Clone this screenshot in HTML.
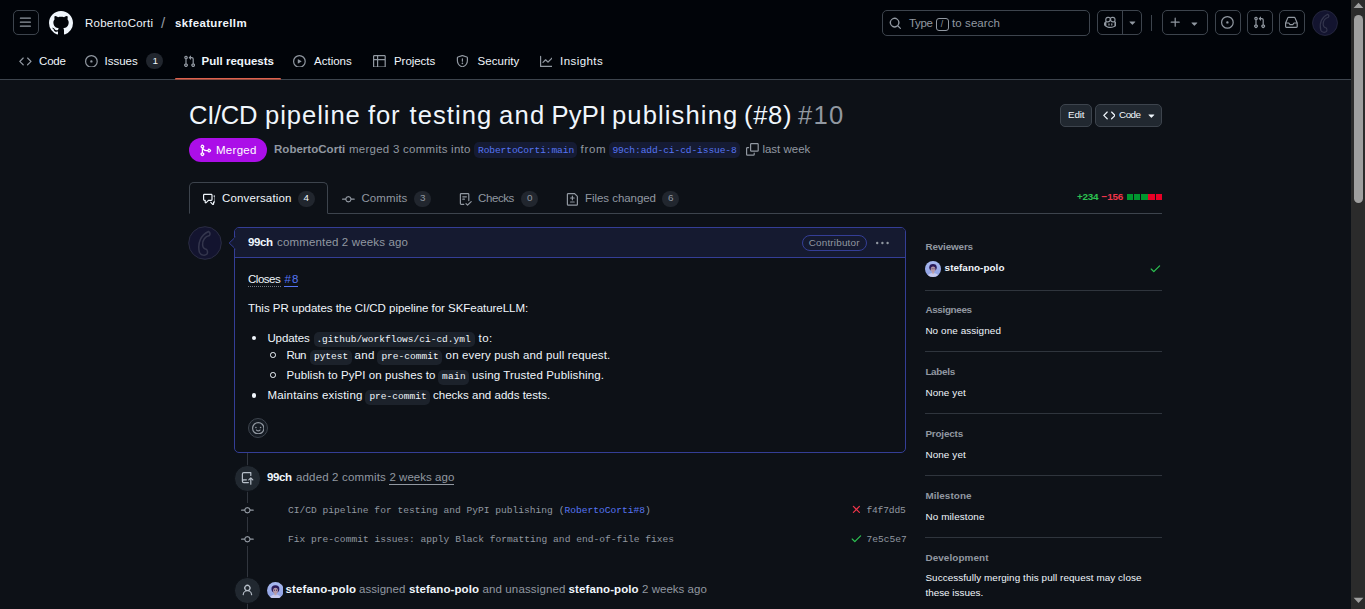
<!DOCTYPE html>
<html><head><meta charset="utf-8"><title>PR</title>
<style>
html,body{margin:0;padding:0;background:#0d1117;overflow:hidden;}
body{width:1365px;height:609px;position:relative;font-family:"Liberation Sans",sans-serif;}
#p{position:absolute;left:0;top:0;width:1365px;height:609px;overflow:hidden;}
#p>*{position:absolute;display:block;box-sizing:border-box;white-space:pre;}
</style></head><body><div id="p">
<div style="left:0px;top:0px;width:1365px;height:80px;background:#010409"></div>
<div style="left:0px;top:79px;width:1351px;height:1px;background:#3d444d"></div>
<div style="left:13px;top:10px;width:25.6px;height:24.8px;border:1px solid #3d444d;border-radius:5px"></div>
<svg style="left:19.4px;top:16.0px" width="12.8" height="12.8" viewBox="0 0 16 16" fill="#9198a1"><path d="M1 2.75A.75.75 0 0 1 1.75 2h12.5a.75.75 0 0 1 0 1.5H1.75A.75.75 0 0 1 1 2.750Zm0 5A.75.75 0 0 1 1.75 7h12.5a.75.75 0 0 1 0 1.5H1.75A.75.75 0 0 1 1 7.750ZM1.75 12h12.5a.75.75 0 0 1 0 1.5H1.75a.75.75 0 0 1 0-1.5Z"/></svg>
<svg style="left:48.6px;top:10.6px" width="24" height="24" viewBox="0 0 16 16" fill="#f0f6fc"><path d="M8 0c4.42 0 8 3.58 8 8a8.013 8.013 0 0 1-5.45 7.59c-.4.08-.55-.17-.55-.38 0-.27.01-1.13.01-2.2 0-.75-.25-1.23-.54-1.48 1.78-.2 3.65-.88 3.65-3.95 0-.88-.31-1.59-.82-2.15.08-.2.36-1.02-.08-2.12 0 0-.67-.22-2.2.82-.64-.18-1.32-.27-2-.27-.68 0-1.36.09-2 .27-1.53-1.03-2.2-.82-2.2-.82-.44 1.1-.16 1.92-.08 2.12-.51.56-.82 1.28-.82 2.15 0 3.06 1.86 3.75 3.64 3.95-.23.2-.44.55-.51 1.07-.46.21-1.61.55-2.33-.66-.15-.24-.6-.83-1.23-.82-.67.01-.27.38.01.53.34.19.73.9.82 1.13.16.45.68 1.31 2.69.94 0 .67.01 1.3.01 1.49 0 .21-.15.45-.55.38A7.995 7.995 0 0 1 0 8c0-4.42 3.58-8 8-8Z"/></svg>
<span style="left:85.00px;top:15.01px;font:400 11.5px/16px 'Liberation Sans', sans-serif;color:#f0f6fc;letter-spacing:0.251px;">RobertoCorti</span>
<span style="left:161.00px;top:12.10px;font:400 15px/21px 'Liberation Sans', sans-serif;color:#9198a1;letter-spacing:0.000px;">/</span>
<span style="left:175.00px;top:15.01px;font:700 11.5px/16px 'Liberation Sans', sans-serif;color:#f0f6fc;letter-spacing:0.352px;">skfeaturellm</span>
<svg style="left:19px;top:54.6px" width="12.8" height="12.8" viewBox="0 0 16 16" fill="#9198a1"><path d="m11.28 3.22 4.25 4.25a.75.75 0 0 1 0 1.06l-4.25 4.25a.749.749 0 0 1-1.275-.326.749.749 0 0 1 .215-.734L13.94 8l-3.72-3.72a.749.749 0 0 1 .326-1.275.749.749 0 0 1 .734.215Zm-6.56 0a.751.751 0 0 1 1.042.018.751.751 0 0 1 .018 1.042L2.06 8l3.72 3.72a.749.749 0 0 1-.326 1.275.749.749 0 0 1-.734-.215L.47 8.53a.75.75 0 0 1 0-1.06Z"/></svg>
<span style="left:39.00px;top:53.01px;font:400 11.5px/16px 'Liberation Sans', sans-serif;color:#f0f6fc;letter-spacing:-0.165px;">Code</span>
<svg style="left:85px;top:54.6px" width="12.8" height="12.8" viewBox="0 0 16 16" fill="#9198a1"><path d="M8 9.5a1.5 1.5 0 1 0 0-3 1.5 1.5 0 0 0 0 3ZM8 0a8 8 0 1 1 0 16A8 8 0 0 1 8 0ZM1.5 8a6.5 6.5 0 1 0 13 0 6.5 6.5 0 0 0-13 0Z"/></svg>
<span style="left:104.60px;top:53.01px;font:400 11.5px/16px 'Liberation Sans', sans-serif;color:#f0f6fc;letter-spacing:-0.017px;">Issues</span>
<div style="left:146px;top:53px;width:17px;height:16px;background:#21262e;border-radius:8px"></div>
<span style="left:152.60px;top:53.57px;font:400 9.9px/14px 'Liberation Sans', sans-serif;color:#f0f6fc;letter-spacing:0.000px;">1</span>
<svg style="left:182.6px;top:54.6px" width="12.8" height="12.8" viewBox="0 0 16 16" fill="#9198a1"><path d="M1.5 3.25a2.25 2.25 0 1 1 3 2.122v5.256a2.251 2.251 0 1 1-1.5 0V5.372A2.25 2.25 0 0 1 1.5 3.25Zm5.677-.177L9.573.677A.25.25 0 0 1 10 .854V2.5h1A2.5 2.5 0 0 1 13.5 5v5.628a2.251 2.251 0 1 1-1.5 0V5a1 1 0 0 0-1-1h-1v1.646a.25.25 0 0 1-.427.177L7.177 3.427a.25.25 0 0 1 0-.354ZM3.75 2.5a.75.75 0 1 0 0 1.5.75.75 0 0 0 0-1.5Zm0 9.5a.75.75 0 1 0 0 1.5.75.75 0 0 0 0-1.5Zm8.25.75a.75.75 0 1 0 1.5 0 .75.75 0 0 0-1.5 0Z"/></svg>
<span style="left:201.60px;top:53.01px;font:700 11.5px/16px 'Liberation Sans', sans-serif;color:#f0f6fc;letter-spacing:0.015px;">Pull requests</span>
<div style="left:175px;top:77.6px;width:105.5px;height:1.4px;background:#de624e;border-radius:1px 1px 0 0"></div>
<div style="left:175px;top:79px;width:105.5px;height:1px;background:#8f4a3f"></div>
<svg style="left:293px;top:54.6px" width="12.8" height="12.8" viewBox="0 0 16 16" fill="#9198a1"><path d="M8 0a8 8 0 1 1 0 16A8 8 0 0 1 8 0ZM1.5 8a6.5 6.5 0 1 0 13 0 6.5 6.5 0 0 0-13 0Zm4.879-2.773 4.264 2.559a.25.25 0 0 1 0 .428l-4.264 2.559A.25.25 0 0 1 6 10.559V5.442a.25.25 0 0 1 .379-.215Z"/></svg>
<span style="left:314.00px;top:53.01px;font:400 11.5px/16px 'Liberation Sans', sans-serif;color:#f0f6fc;letter-spacing:0.006px;">Actions</span>
<svg style="left:373px;top:54.6px" width="12.8" height="12.8" viewBox="0 0 16 16" fill="#9198a1"><path d="M0 1.75C0 .784.784 0 1.75 0h12.5C15.216 0 16 .784 16 1.75v12.5A1.75 1.75 0 0 1 14.25 16H1.75A1.75 1.75 0 0 1 0 14.25ZM6.5 6.5v8h7.75a.25.25 0 0 0 .25-.25V6.5Zm8-1.5V1.75a.25.25 0 0 0-.25-.25H6.5V5Zm-13 1.5v7.75c0 .138.112.25.25.25H5v-8ZM5 5V1.5H1.75a.25.25 0 0 0-.25.25V5Z"/></svg>
<span style="left:394.00px;top:53.01px;font:400 11.5px/16px 'Liberation Sans', sans-serif;color:#f0f6fc;letter-spacing:-0.056px;">Projects</span>
<svg style="left:456px;top:54.6px" width="12.8" height="12.8" viewBox="0 0 16 16" fill="#9198a1"><path d="M7.467.133a1.748 1.748 0 0 1 1.066 0l5.25 1.68A1.75 1.75 0 0 1 15 3.48V7c0 1.566-.32 3.182-1.303 4.682-.983 1.498-2.585 2.813-5.032 3.855a1.697 1.697 0 0 1-1.33 0c-2.447-1.042-4.049-2.357-5.032-3.855C1.32 10.182 1 8.566 1 7V3.48a1.75 1.75 0 0 1 1.217-1.667Zm.61 1.429a.25.25 0 0 0-.153 0l-5.25 1.68a.25.25 0 0 0-.174.238V7c0 1.358.275 2.666 1.057 3.86.784 1.194 2.121 2.34 4.366 3.297a.196.196 0 0 0 .154 0c2.245-.956 3.582-2.104 4.366-3.298C13.225 9.666 13.5 8.36 13.5 7V3.48a.251.251 0 0 0-.174-.237l-5.25-1.68ZM8.75 4.75v3a.75.75 0 0 1-1.5 0v-3a.75.75 0 0 1 1.5 0ZM9 10.5a1 1 0 1 1-2 0 1 1 0 0 1 2 0Z"/></svg>
<span style="left:477.60px;top:53.01px;font:400 11.5px/16px 'Liberation Sans', sans-serif;color:#f0f6fc;letter-spacing:0.030px;">Security</span>
<svg style="left:539.6px;top:54.6px" width="12.8" height="12.8" viewBox="0 0 16 16" fill="#9198a1"><path d="M1.5 1.75V13.5h13.75a.75.75 0 0 1 0 1.5H.75a.75.75 0 0 1-.75-.75V1.75a.75.75 0 0 1 1.5 0Zm14.28 2.53-5.25 5.25a.75.75 0 0 1-1.06 0L7 7.06 4.28 9.78a.751.751 0 0 1-1.042-.018.751.751 0 0 1-.018-1.042l3.25-3.25a.75.75 0 0 1 1.06 0L10 7.94l4.72-4.72a.751.751 0 0 1 1.042.018.751.751 0 0 1 .018 1.042Z"/></svg>
<span style="left:560.00px;top:53.01px;font:400 11.5px/16px 'Liberation Sans', sans-serif;color:#f0f6fc;letter-spacing:0.445px;">Insights</span>
<div style="left:882px;top:10px;width:208px;height:26px;border:1px solid #3d444d;border-radius:5px"></div>
<svg style="left:889px;top:16.6px" width="12.8" height="12.8" viewBox="0 0 16 16" fill="#9198a1"><path d="M10.68 11.74a6 6 0 0 1-7.922-8.982 6 6 0 0 1 8.982 7.922l3.04 3.04a.749.749 0 0 1-.326 1.275.749.749 0 0 1-.734-.215ZM11.5 7a4.499 4.499 0 1 0-8.997 0A4.499 4.499 0 0 0 11.5 7Z"/></svg>
<span style="left:909.00px;top:15.01px;font:400 11.5px/16px 'Liberation Sans', sans-serif;color:#9198a1;letter-spacing:-0.312px;">Type</span>
<div style="left:936.4px;top:18px;width:12.6px;height:12.6px;border:1px solid #9198a1;border-radius:3px"></div>
<span style="left:940.80px;top:18.05px;font:400 8.5px/12px 'Liberation Sans', sans-serif;color:#9198a1;letter-spacing:0.000px;">/</span>
<span style="left:952.00px;top:15.01px;font:400 11.5px/16px 'Liberation Sans', sans-serif;color:#9198a1;letter-spacing:0.087px;">to search</span>
<div style="left:1097px;top:10px;width:44.8px;height:24.8px;border:1px solid #3d444d;border-radius:5px"></div>
<div style="left:1122px;top:10px;width:1px;height:24.8px;background:#3d444d"></div>
<svg style="left:1103.6px;top:16.0px" width="12.8" height="12.8" viewBox="0 0 16 16" fill="#9198a1"><path d="M7.998 15.035c-4.562 0-7.873-2.914-7.998-3.749V9.338c.085-.628.677-1.686 1.588-2.065.013-.07.024-.143.036-.218.029-.183.06-.384.126-.612-.201-.508-.254-1.084-.254-1.656 0-.87.128-1.769.693-2.484.579-.733 1.494-1.124 2.724-1.261 1.206-.134 2.262.034 2.944.765.05.053.096.108.139.165.044-.057.094-.112.143-.165.682-.731 1.738-.899 2.944-.765 1.23.137 2.145.528 2.724 1.261.566.715.693 1.614.693 2.484 0 .572-.053 1.148-.254 1.656.066.228.098.429.126.612.012.076.024.148.037.218.924.385 1.522 1.471 1.591 2.095v1.872c0 .766-3.351 3.795-8.002 3.795Zm0-1.485c2.28 0 4.584-1.11 5.002-1.433V7.862l-.023-.116c-.49.21-1.075.291-1.727.291-1.146 0-2.059-.327-2.71-.991A3.222 3.222 0 0 1 8 6.303a3.24 3.24 0 0 1-.544.743c-.65.664-1.563.991-2.71.991-.652 0-1.236-.081-1.727-.291l-.023.116v4.255c.419.323 2.722 1.433 5.002 1.433ZM6.762 2.83c-.193-.206-.637-.413-1.682-.297-1.019.113-1.479.404-1.713.7-.247.312-.369.789-.369 1.554 0 .793.129 1.171.308 1.371.162.181.519.379 1.442.379.853 0 1.339-.235 1.638-.54.315-.322.527-.827.617-1.553.117-.935-.037-1.395-.241-1.614Zm4.155-.297c-1.044-.116-1.488.091-1.681.297-.204.219-.359.679-.242 1.614.091.726.303 1.231.618 1.553.299.305.784.54 1.638.54.922 0 1.28-.198 1.442-.379.179-.2.308-.578.308-1.371 0-.765-.123-1.242-.37-1.554-.233-.296-.693-.587-1.713-.7ZM6.25 9.037a.75.75 0 0 1 .75.75v1.501a.75.75 0 0 1-1.5 0V9.787a.75.75 0 0 1 .75-.75Zm4.25.75v1.501a.75.75 0 0 1-1.5 0V9.787a.75.75 0 0 1 1.5 0Z"/></svg>
<svg style="left:1125.6px;top:16.0px" width="12.8" height="12.8" viewBox="0 0 16 16" fill="#9198a1"><path d="m4.427 7.427 3.396 3.396a.25.25 0 0 0 .354 0l3.396-3.396A.25.25 0 0 0 11.396 7H4.604a.25.25 0 0 0-.177.427Z"/></svg>
<div style="left:1151px;top:15px;width:1px;height:16px;background:#3d444d"></div>
<div style="left:1162px;top:10px;width:46px;height:24.8px;border:1px solid #3d444d;border-radius:5px"></div>
<svg style="left:1168.6px;top:16.0px" width="12.8" height="12.8" viewBox="0 0 16 16" fill="#9198a1"><path d="M7.75 2a.75.75 0 0 1 .75.75V7h4.25a.75.75 0 0 1 0 1.5H8.5v4.25a.75.75 0 0 1-1.5 0V8.5H2.75a.75.75 0 0 1 0-1.5H7V2.75A.75.75 0 0 1 7.75 2Z"/></svg>
<svg style="left:1188px;top:16.6px" width="12.8" height="12.8" viewBox="0 0 16 16" fill="#9198a1"><path d="m4.427 7.427 3.396 3.396a.25.25 0 0 0 .354 0l3.396-3.396A.25.25 0 0 0 11.396 7H4.604a.25.25 0 0 0-.177.427Z"/></svg>
<div style="left:1215px;top:10px;width:25.6px;height:24.8px;border:1px solid #3d444d;border-radius:5px"></div>
<svg style="left:1221.4px;top:16.0px" width="12.8" height="12.8" viewBox="0 0 16 16" fill="#9198a1"><path d="M8 9.5a1.5 1.5 0 1 0 0-3 1.5 1.5 0 0 0 0 3ZM8 0a8 8 0 1 1 0 16A8 8 0 0 1 8 0ZM1.5 8a6.5 6.5 0 1 0 13 0 6.5 6.5 0 0 0-13 0Z"/></svg>
<div style="left:1247px;top:10px;width:25.6px;height:24.8px;border:1px solid #3d444d;border-radius:5px"></div>
<svg style="left:1253.4px;top:16.0px" width="12.8" height="12.8" viewBox="0 0 16 16" fill="#9198a1"><path d="M1.5 3.25a2.25 2.25 0 1 1 3 2.122v5.256a2.251 2.251 0 1 1-1.5 0V5.372A2.25 2.25 0 0 1 1.5 3.25Zm5.677-.177L9.573.677A.25.25 0 0 1 10 .854V2.5h1A2.5 2.5 0 0 1 13.5 5v5.628a2.251 2.251 0 1 1-1.5 0V5a1 1 0 0 0-1-1h-1v1.646a.25.25 0 0 1-.427.177L7.177 3.427a.25.25 0 0 1 0-.354ZM3.75 2.5a.75.75 0 1 0 0 1.5.75.75 0 0 0 0-1.5Zm0 9.5a.75.75 0 1 0 0 1.5.75.75 0 0 0 0-1.5Zm8.25.75a.75.75 0 1 0 1.5 0 .75.75 0 0 0-1.5 0Z"/></svg>
<div style="left:1279px;top:10px;width:25.6px;height:24.8px;border:1px solid #3d444d;border-radius:5px"></div>
<svg style="left:1285.4px;top:16.0px" width="12.8" height="12.8" viewBox="0 0 16 16" fill="#9198a1"><path d="M2.8 2.06A1.75 1.75 0 0 1 4.41 1h7.18c.7 0 1.333.417 1.61 1.06l2.74 6.395c.04.093.06.194.06.295v4.5A1.75 1.75 0 0 1 14.25 15H1.75A1.75 1.75 0 0 1 0 13.25v-4.5c0-.101.02-.202.06-.295Zm1.61.44a.25.25 0 0 0-.23.152L1.887 8H4.75a.75.75 0 0 1 .6.3L6.625 10h2.75l1.275-1.7a.75.75 0 0 1 .6-.3h2.863L11.82 2.652a.25.25 0 0 0-.23-.152Zm10.09 7h-2.875l-1.275 1.7a.75.75 0 0 1-.6.3h-3.5a.75.75 0 0 1-.6-.3L4.375 9.5H1.5v3.75c0 .138.112.25.25.25h12.5a.25.25 0 0 0 .25-.25Z"/></svg>
<svg style="left:1311.5px;top:9.5px" width="26" height="26" viewBox="0 0 34 34"><circle cx="17" cy="17" r="16.3" fill="#13142f" stroke="#2b2d44" stroke-width="1"/><path d="M20.5 5.5C13 9 9 17 11.5 26.5c1.5 3 5.5 3.5 7.500 1.5 .8-1 .6-3.500-.4-4.500-2.600-.5-3.800-2-4-4.500C14.500 14 17.500 10.500 21.500 9.500c.8-1.500.4-3.200-1-4Z" fill="none" stroke="#34364d" stroke-width="1.500"/></svg>
<div style="left:1351px;top:0px;width:14px;height:609px;background:#2b2b2b"></div>
<div style="left:1354px;top:15px;width:9px;height:188px;background:#9f9f9f;border-radius:4.5px"></div>
<svg style="left:1351px;top:0" width="14" height="12" viewBox="0 0 14 12"><path d="M2.600 8 L7.500 2.700 L12.400 8Z" fill="#9f9f9f"/></svg>
<svg style="left:1351px;top:596px" width="14" height="12" viewBox="0 0 14 12"><path d="M2.600 1.700 L12.400 1.700 L7.500 7Z" fill="#9f9f9f"/></svg>
<span style="left:189.00px;top:97.12px;font:400 25.6px/36px 'Liberation Sans', sans-serif;color:#f0f6fc;letter-spacing:-0.297px;">CI/CD</span>
<span style="left:265.00px;top:97.12px;font:400 25.6px/36px 'Liberation Sans', sans-serif;color:#f0f6fc;letter-spacing:0.944px;">pipeline</span>
<span style="left:368.00px;top:97.12px;font:400 25.6px/36px 'Liberation Sans', sans-serif;color:#f0f6fc;letter-spacing:0.828px;">for</span>
<span style="left:409.60px;top:97.12px;font:400 25.6px/36px 'Liberation Sans', sans-serif;color:#f0f6fc;letter-spacing:1.038px;">testing</span>
<span style="left:499.00px;top:97.12px;font:400 25.6px/36px 'Liberation Sans', sans-serif;color:#f0f6fc;letter-spacing:1.266px;">and</span>
<span style="left:551.60px;top:97.12px;font:400 25.6px/36px 'Liberation Sans', sans-serif;color:#f0f6fc;letter-spacing:0.154px;">PyPI</span>
<span style="left:612.00px;top:97.12px;font:400 25.6px/36px 'Liberation Sans', sans-serif;color:#f0f6fc;letter-spacing:1.108px;">publishing</span>
<span style="left:744.00px;top:97.12px;font:400 25.6px/36px 'Liberation Sans', sans-serif;color:#f0f6fc;letter-spacing:0.670px;">(#8)</span>
<span style="left:798.00px;top:97.12px;font:400 25.6px/36px 'Liberation Sans', sans-serif;color:#9198a1;letter-spacing:1.266px;">#10</span>
<div style="left:1060px;top:104px;width:32px;height:23px;background:#212830;border:1px solid #3d444d;border-radius:5px"></div>
<span style="left:1068.00px;top:107.57px;font:400 9.9px/14px 'Liberation Sans', sans-serif;color:#f0f6fc;letter-spacing:-0.157px;">Edit</span>
<div style="left:1095px;top:104px;width:67px;height:23px;background:#212830;border:1px solid #3d444d;border-radius:5px"></div>
<svg style="left:1102.5px;top:109.1px" width="12.8" height="12.8" viewBox="0 0 16 16" fill="#f0f6fc"><path d="m11.28 3.22 4.25 4.25a.75.75 0 0 1 0 1.06l-4.25 4.25a.749.749 0 0 1-1.275-.326.749.749 0 0 1 .215-.734L13.94 8l-3.72-3.72a.749.749 0 0 1 .326-1.275.749.749 0 0 1 .734.215Zm-6.56 0a.751.751 0 0 1 1.042.018.751.751 0 0 1 .018 1.042L2.06 8l3.72 3.72a.749.749 0 0 1-.326 1.275.749.749 0 0 1-.734-.215L.47 8.53a.75.75 0 0 1 0-1.06Z"/></svg>
<span style="left:1119.00px;top:107.57px;font:400 9.9px/14px 'Liberation Sans', sans-serif;color:#f0f6fc;letter-spacing:-0.505px;">Code</span>
<svg style="left:1145.1px;top:109.4px" width="12.8" height="12.8" viewBox="0 0 16 16" fill="#f0f6fc"><path d="m4.427 7.427 3.396 3.396a.25.25 0 0 0 .354 0l3.396-3.396A.25.25 0 0 0 11.396 7H4.604a.25.25 0 0 0-.177.427Z"/></svg>
<div style="left:189px;top:138px;width:78px;height:24px;background:#ab0ee8;border-radius:12px"></div>
<svg style="left:199.4px;top:143.8px" width="12.8" height="12.8" viewBox="0 0 16 16" fill="#ffffff"><path d="M5.45 5.154A4.25 4.25 0 0 0 9.25 7.5h1.378a2.251 2.251 0 1 1 0 1.5H9.25A5.734 5.734 0 0 1 5 7.123v3.505a2.25 2.25 0 1 1-1.5 0V5.372a2.25 2.25 0 1 1 1.95-.218ZM4.25 13.5a.75.75 0 1 0 0-1.5.75.75 0 0 0 0 1.5Zm8.5-4.5a.75.75 0 1 0 0-1.5.75.75 0 0 0 0 1.5ZM5 3.25a.75.75 0 1 0 0 .005V3.25Z"/></svg>
<span style="left:216.00px;top:142.01px;font:400 11.5px/16px 'Liberation Sans', sans-serif;color:#ffffff;letter-spacing:0.281px;">Merged</span>
<span style="left:274.00px;top:141.01px;font:700 11.5px/16px 'Liberation Sans', sans-serif;color:#9198a1;letter-spacing:0.026px;">RobertoCorti</span>
<span style="left:349.00px;top:141.01px;font:400 11.5px/16px 'Liberation Sans', sans-serif;color:#9198a1;letter-spacing:0.254px;">merged 3 commits into</span>
<div style="left:474px;top:142px;width:103px;height:16.4px;background:#151b33;border-radius:5px"></div>
<span style="left:478.00px;top:143.94px;font:400 9.6px/13px 'Liberation Mono', monospace;color:#5675f3;letter-spacing:-0.107px;">RobertoCorti:main</span>
<span style="left:580.60px;top:141.01px;font:400 11.5px/16px 'Liberation Sans', sans-serif;color:#9198a1;letter-spacing:0.660px;">from</span>
<div style="left:609px;top:142px;width:131px;height:16.4px;background:#151b33;border-radius:5px"></div>
<span style="left:612.40px;top:143.94px;font:400 9.6px/13px 'Liberation Mono', monospace;color:#5675f3;letter-spacing:-0.110px;">99ch:add-ci-cd-issue-8</span>
<svg style="left:746px;top:143.2px" width="12.8" height="12.8" viewBox="0 0 16 16" fill="#9198a1"><path d="M0 6.75C0 5.784.784 5 1.75 5h1.5a.75.75 0 0 1 0 1.5h-1.5a.25.25 0 0 0-.25.25v7.5c0 .138.112.25.25.25h7.5a.25.25 0 0 0 .25-.25v-1.5a.75.75 0 0 1 1.5 0v1.5A1.75 1.75 0 0 1 9.25 16h-7.5A1.75 1.75 0 0 1 0 14.25ZM5 1.75C5 .784 5.784 0 6.75 0h7.5C15.216 0 16 .784 16 1.75v7.5A1.75 1.75 0 0 1 14.25 11h-7.5A1.75 1.75 0 0 1 5 9.25Zm1.75-.25a.25.25 0 0 0-.25.25v7.5c0 .138.112.25.25.25h7.5a.25.25 0 0 0 .25-.25v-7.5a.25.25 0 0 0-.25-.25Z"/></svg>
<span style="left:762.40px;top:141.01px;font:400 11.5px/16px 'Liberation Sans', sans-serif;color:#9198a1;letter-spacing:0.002px;">last week</span>
<div style="left:189px;top:213px;width:973px;height:1px;background:#3d444d"></div>
<div style="left:189px;top:182px;width:138.8px;height:32px;border:1px solid #3d444d;border-bottom:1px solid #0d1117;border-radius:5px 5px 0 0;background:#0d1117"></div>
<svg style="left:202.6px;top:193.2px" width="12.8" height="12.8" viewBox="0 0 16 16" fill="#f0f6fc"><path d="M1.75 1h8.5c.966 0 1.75.784 1.75 1.75v5.5A1.75 1.75 0 0 1 10.25 10H7.061l-2.574 2.573A1.458 1.458 0 0 1 2 11.543V10h-.25A1.75 1.75 0 0 1 0 8.25v-5.5C0 1.784.784 1 1.75 1ZM1.5 2.75v5.5c0 .138.112.25.25.25h1a.75.75 0 0 1 .75.75v2.19l2.72-2.72a.749.749 0 0 1 .53-.22h3.5a.25.25 0 0 0 .25-.25v-5.5a.25.25 0 0 0-.25-.25h-8.5a.25.25 0 0 0-.25.25Zm13 2a.25.25 0 0 0-.25-.25h-.5a.75.75 0 0 1 0-1.5h.5c.966 0 1.75.784 1.75 1.75v5.5A1.75 1.75 0 0 1 14.25 12H14v1.543a1.458 1.458 0 0 1-2.487 1.03L9.22 12.28a.749.749 0 0 1 .326-1.275.749.749 0 0 1 .734.215l2.22 2.22v-2.19a.75.75 0 0 1 .75-.75h1a.25.25 0 0 0 .25-.25Z"/></svg>
<span style="left:222.00px;top:190.01px;font:400 11.5px/16px 'Liberation Sans', sans-serif;color:#f0f6fc;letter-spacing:0.149px;">Conversation</span>
<div style="left:298px;top:191px;width:17px;height:16px;background:#21262e;border-radius:8px"></div>
<span style="left:303.40px;top:191.17px;font:400 9.9px/14px 'Liberation Sans', sans-serif;color:#f0f6fc;letter-spacing:0.000px;">4</span>
<svg style="left:341.8px;top:192.8px" width="12.8" height="12.8" viewBox="0 0 16 16" fill="#9198a1"><path d="M11.93 8.5a4.002 4.002 0 0 1-7.86 0H.75a.75.75 0 0 1 0-1.5h3.32a4.002 4.002 0 0 1 7.86 0h3.32a.75.75 0 0 1 0 1.5Zm-1.43-.75a2.5 2.5 0 1 0-5 0 2.5 2.5 0 0 0 5 0Z"/></svg>
<span style="left:361.40px;top:190.01px;font:400 11.5px/16px 'Liberation Sans', sans-serif;color:#9198a1;letter-spacing:0.098px;">Commits</span>
<div style="left:414px;top:191px;width:17px;height:16px;background:#21262e;border-radius:8px"></div>
<span style="left:420.00px;top:191.17px;font:400 9.9px/14px 'Liberation Sans', sans-serif;color:#9198a1;letter-spacing:0.000px;">3</span>
<svg style="left:458.8px;top:193.2px" width="12.8" height="12.8" viewBox="0 0 16 16" fill="#9198a1"><path d="M2.5 1.75v11.5c0 .138.112.25.25.25h3.17a.75.75 0 0 1 0 1.5H2.75A1.75 1.75 0 0 1 1 13.25V1.75C1 .784 1.784 0 2.75 0h8.5C12.216 0 13 .784 13 1.75v7.736a.75.75 0 0 1-1.5 0V1.75a.25.25 0 0 0-.25-.25h-8.5a.25.25 0 0 0-.25.25Zm13.274 9.537v-.001l-4.557 4.45a.75.75 0 0 1-1.055-.008l-1.943-1.95a.75.75 0 0 1 1.062-1.058l1.419 1.425 4.026-3.932a.75.75 0 1 1 1.048 1.074ZM4.75 4h4.5a.75.75 0 0 1 0 1.5h-4.5a.75.75 0 0 1 0-1.5ZM4 7.75A.75.75 0 0 1 4.75 7h2a.75.75 0 0 1 0 1.5h-2A.75.75 0 0 1 4 7.75Z"/></svg>
<span style="left:478.00px;top:190.01px;font:400 11.5px/16px 'Liberation Sans', sans-serif;color:#9198a1;letter-spacing:-0.399px;">Checks</span>
<div style="left:521px;top:191px;width:17px;height:16px;background:#21262e;border-radius:8px"></div>
<span style="left:527.00px;top:191.17px;font:400 9.9px/14px 'Liberation Sans', sans-serif;color:#9198a1;letter-spacing:0.000px;">0</span>
<svg style="left:566.2px;top:193.2px" width="12.8" height="12.8" viewBox="0 0 16 16" fill="#9198a1"><path d="M1 1.75C1 .784 1.784 0 2.75 0h7.586c.464 0 .909.184 1.237.513l2.914 2.914c.329.328.513.773.513 1.237v9.586A1.75 1.75 0 0 1 13.25 16H2.75A1.75 1.75 0 0 1 1 14.25Zm1.75-.25a.25.25 0 0 0-.25.25v12.5c0 .138.112.25.25.25h10.500a.25.25 0 0 0 .25-.25V4.664a.25.25 0 0 0-.073-.177l-2.914-2.914a.25.25 0 0 0-.177-.073ZM8 3.25a.75.75 0 0 1 .75.75v1.5h1.5a.75.75 0 0 1 0 1.5h-1.5v1.5a.75.75 0 0 1-1.5 0V7h-1.5a.75.75 0 0 1 0-1.5h1.5V4A.75.75 0 0 1 8 3.25Zm-3 8a.75.75 0 0 1 .75-.75h4.5a.75.75 0 0 1 0 1.5h-4.5a.75.75 0 0 1-.75-.75Z"/></svg>
<span style="left:585.00px;top:190.01px;font:400 11.5px/16px 'Liberation Sans', sans-serif;color:#9198a1;letter-spacing:-0.050px;">Files changed</span>
<div style="left:662px;top:191px;width:17px;height:16px;background:#21262e;border-radius:8px"></div>
<span style="left:668.00px;top:191.17px;font:400 9.9px/14px 'Liberation Sans', sans-serif;color:#9198a1;letter-spacing:0.000px;">6</span>
<span style="left:1077.00px;top:189.77px;font:700 9.9px/14px 'Liberation Sans', sans-serif;color:#2cc251;letter-spacing:-0.250px;">+234</span>
<span style="left:1101.60px;top:189.77px;font:700 9.9px/14px 'Liberation Sans', sans-serif;color:#f0354a;letter-spacing:-0.217px;">−156</span>
<div style="left:1126.8px;top:194px;width:6.4px;height:6.2px;background:#00962f"></div>
<div style="left:1134.0px;top:194px;width:6.4px;height:6.2px;background:#00962f"></div>
<div style="left:1141.2px;top:194px;width:6.4px;height:6.2px;background:#00962f"></div>
<div style="left:1148.3999999999999px;top:194px;width:6.4px;height:6.2px;background:#e90026"></div>
<div style="left:1155.6px;top:194px;width:6.4px;height:6.2px;background:#e90026"></div>
<svg style="left:188px;top:226px" width="34" height="34" viewBox="0 0 34 34"><circle cx="17" cy="17" r="16.3" fill="#13142f" stroke="#2b2d44" stroke-width="1"/><path d="M20.5 5.5C13 9 9 17 11.5 26.5c1.5 3 5.5 3.5 7.500 1.5 .8-1 .6-3.500-.4-4.500-2.600-.5-3.800-2-4-4.500C14.500 14 17.500 10.500 21.500 9.500c.8-1.500.4-3.200-1-4Z" fill="none" stroke="#34364d" stroke-width="1.500"/></svg>
<div style="left:234px;top:227px;width:672px;height:226px;border:1px solid #343e96;border-radius:5px;background:#0d1117"></div>
<div style="left:235px;top:228px;width:670px;height:29px;background:#151a30;border-radius:4px 4px 0 0"></div>
<div style="left:235px;top:257px;width:670px;height:1px;background:#343e96"></div>
<svg style="left:227px;top:235px" width="9" height="16" viewBox="0 0 9 16"><path d="M8.500 2 L2.200 8 L8.500 14" fill="#151a30" stroke="#343e96" stroke-width="1"/><rect x="7.100" y="2.600" width="2" height="10.800" fill="#151a30"/></svg>
<span style="left:248.00px;top:234.01px;font:700 11.5px/16px 'Liberation Sans', sans-serif;color:#f0f6fc;letter-spacing:-0.396px;">99ch</span>
<span style="left:277.00px;top:234.01px;font:400 11.5px/16px 'Liberation Sans', sans-serif;color:#9198a1;letter-spacing:0.157px;">commented 2 weeks ago</span>
<div style="left:802px;top:235px;width:65px;height:16px;border:1px solid #343e96;border-radius:8px"></div>
<span style="left:808.70px;top:235.57px;font:400 9.9px/14px 'Liberation Sans', sans-serif;color:#9198a1;letter-spacing:0.194px;">Contributor</span>
<svg style="left:876px;top:236.8px" width="12.8" height="12.8" viewBox="0 0 16 16" fill="#9198a1"><path d="M8 9a1.5 1.5 0 1 0 0-3 1.5 1.5 0 0 0 0 3ZM1.5 9a1.5 1.5 0 1 0 0-3 1.5 1.5 0 0 0 0 3Zm13 0a1.5 1.5 0 1 0 0-3 1.5 1.5 0 0 0 0 3Z"/></svg>
<span style="left:248.00px;top:271.01px;font:400 11.5px/16px 'Liberation Sans', sans-serif;color:#f0f6fc;letter-spacing:-0.480px;">Closes</span>
<div style="left:248px;top:286px;width:33px;height:1px;border-bottom:1px dotted #6f7680"></div>
<span style="left:284.60px;top:271.01px;font:400 11.5px/16px 'Liberation Sans', sans-serif;color:#5675f3;letter-spacing:1.004px;">#8</span>
<div style="left:283.8px;top:285.7px;width:14.4px;height:1px;background:#5675f3"></div>
<span style="left:248.00px;top:300.01px;font:400 11.5px/16px 'Liberation Sans', sans-serif;color:#f0f6fc;letter-spacing:-0.033px;">This PR updates the CI/CD pipeline for SKFeatureLLM:</span>
<div style="left:251.6px;top:335.8px;width:4.4px;height:4.4px;background:#f0f6fc;border-radius:50%"></div>
<span style="left:267.40px;top:330.01px;font:400 11.5px/16px 'Liberation Sans', sans-serif;color:#f0f6fc;letter-spacing:-0.081px;">Updates</span>
<div style="left:314px;top:332px;width:161px;height:15px;background:#1c222b;border-radius:5px"></div>
<span style="left:316.40px;top:332.97px;font:400 9.5px/13px 'Liberation Mono', monospace;color:#f0f6fc;letter-spacing:0.014px;">.github/workflows/ci-cd.yml</span>
<span style="left:478.60px;top:330.01px;font:400 11.5px/16px 'Liberation Sans', sans-serif;color:#f0f6fc;letter-spacing:0.405px;">to:</span>
<div style="left:270.2px;top:352.2px;width:5.6px;height:5.6px;border:1.2px solid #f0f6fc;border-radius:50%"></div>
<span style="left:286.60px;top:347.01px;font:400 11.5px/16px 'Liberation Sans', sans-serif;color:#f0f6fc;letter-spacing:-0.650px;">Run</span>
<div style="left:310px;top:349.5px;width:41.6px;height:15px;background:#1c222b;border-radius:5px"></div>
<span style="left:314.00px;top:350.37px;font:400 9.5px/13px 'Liberation Mono', monospace;color:#f0f6fc;letter-spacing:-0.021px;">pytest</span>
<span style="left:354.60px;top:347.01px;font:400 11.5px/16px 'Liberation Sans', sans-serif;color:#f0f6fc;letter-spacing:0.304px;">and</span>
<div style="left:377.4px;top:349.5px;width:64.2px;height:15px;background:#1c222b;border-radius:5px"></div>
<span style="left:381.40px;top:350.37px;font:400 9.5px/13px 'Liberation Mono', monospace;color:#f0f6fc;letter-spacing:0.032px;">pre-commit</span>
<span style="left:445.60px;top:347.01px;font:400 11.5px/16px 'Liberation Sans', sans-serif;color:#f0f6fc;letter-spacing:0.138px;">on every push and pull request.</span>
<div style="left:270.2px;top:372.2px;width:5.6px;height:5.6px;border:1.2px solid #f0f6fc;border-radius:50%"></div>
<span style="left:286.60px;top:367.01px;font:400 11.5px/16px 'Liberation Sans', sans-serif;color:#f0f6fc;letter-spacing:0.065px;">Publish to PyPI on pushes to</span>
<div style="left:438px;top:369.5px;width:31px;height:15px;background:#1c222b;border-radius:5px"></div>
<span style="left:442.00px;top:370.37px;font:400 9.5px/13px 'Liberation Mono', monospace;color:#f0f6fc;letter-spacing:0.299px;">main</span>
<span style="left:472.00px;top:367.01px;font:400 11.5px/16px 'Liberation Sans', sans-serif;color:#f0f6fc;letter-spacing:0.146px;">using Trusted Publishing.</span>
<div style="left:251.6px;top:393.2px;width:4.4px;height:4.4px;background:#f0f6fc;border-radius:50%"></div>
<span style="left:267.40px;top:387.01px;font:400 11.5px/16px 'Liberation Sans', sans-serif;color:#f0f6fc;letter-spacing:0.211px;">Maintains existing</span>
<div style="left:365.4px;top:389.5px;width:64.6px;height:15px;background:#1c222b;border-radius:5px"></div>
<span style="left:369.40px;top:390.37px;font:400 9.5px/13px 'Liberation Mono', monospace;color:#f0f6fc;letter-spacing:0.032px;">pre-commit</span>
<span style="left:433.00px;top:387.01px;font:400 11.5px/16px 'Liberation Sans', sans-serif;color:#f0f6fc;letter-spacing:0.010px;">checks and adds tests.</span>
<div style="left:248px;top:418px;width:20.2px;height:20.2px;border:1px solid #3d444d;border-radius:50%;background:#151b23"></div>
<svg style="left:251.8px;top:421.8px" width="12.5" height="12.5" viewBox="0 0 16 16" fill="#9198a1"><path d="M8 0a8 8 0 1 1 0 16A8 8 0 0 1 8 0ZM1.5 8a6.5 6.5 0 1 0 13 0 6.5 6.5 0 0 0-13 0Zm3.82 1.636a.75.75 0 0 1 1.038.175l.007.009c.103.118.22.222.35.31.264.178.683.37 1.285.37.602 0 1.02-.192 1.285-.371.13-.088.247-.192.35-.31l.007-.008a.75.75 0 0 1 1.222.87l-.022.03c-.182.248-.422.48-.732.69-.44.297-1.101.6-2.11.6-1.009 0-1.670-.303-2.110-.6a2.970 2.970 0 0 1-.732-.69l-.022-.03a.75.75 0 0 1 .184-1.045ZM12 7a1 1 0 1 1-2 0 1 1 0 0 1 2 0ZM5 8a1 1 0 1 1 0-2 1 1 0 0 1 0 2Z"/></svg>
<div style="left:247px;top:453px;width:1.2px;height:156px;background:#31363e"></div>
<div style="left:234.4px;top:465px;width:26.6px;height:26.6px;background:#212830;border-radius:50%;border:1.6px solid #0d1117"></div>
<svg style="left:241.3px;top:472px" width="12.8" height="12.8" viewBox="0 0 16 16" fill="#b7bfc9"><path d="M1 2.5A2.5 2.5 0 0 1 3.5 0h8.75a.75.75 0 0 1 .75.75v3.5a.75.75 0 0 1-1.5 0V1.5h-8a1 1 0 0 0-1 1v6.708A2.493 2.493 0 0 1 3.5 9h3.250a.75.75 0 0 1 0 1.5H3.5a1 1 0 0 0 0 2h5.750a.75.75 0 0 1 0 1.5H3.5A2.5 2.5 0 0 1 1 11.5Zm13.230 7.790h.001l-1.224-1.224v6.184a.75.75 0 0 1-1.5 0V9.066L10.280 10.290a.75.75 0 0 1-1.060-1.061l2.505-2.504a.75.75 0 0 1 1.060 0L15.290 9.230a.751.751 0 0 1-.018 1.042.751.751 0 0 1-1.042.018Z"/></svg>
<span style="left:267.00px;top:469.01px;font:700 11.5px/16px 'Liberation Sans', sans-serif;color:#f0f6fc;letter-spacing:-0.396px;">99ch</span>
<span style="left:296.00px;top:469.01px;font:400 11.5px/16px 'Liberation Sans', sans-serif;color:#9198a1;letter-spacing:0.156px;">added 2 commits</span>
<span style="left:389.40px;top:469.01px;font:400 11.5px/16px 'Liberation Sans', sans-serif;color:#9198a1;letter-spacing:0.043px;">2 weeks ago</span>
<div style="left:389.4px;top:484px;width:64.6px;height:1px;background:#9198a1"></div>
<div style="left:241px;top:503px;width:13px;height:14px;background:#0d1117"></div>
<svg style="left:241.2px;top:503.8px" width="12.8" height="12.8" viewBox="0 0 16 16" fill="#9198a1"><path d="M11.93 8.5a4.002 4.002 0 0 1-7.86 0H.75a.75.75 0 0 1 0-1.5h3.32a4.002 4.002 0 0 1 7.86 0h3.32a.75.75 0 0 1 0 1.5Zm-1.43-.75a2.5 2.5 0 1 0-5 0 2.5 2.5 0 0 0 5 0Z"/></svg>
<span style="left:288.00px;top:503.94px;font:400 9.6px/13px 'Liberation Mono', monospace;color:#9198a1;letter-spacing:0.001px;">CI/CD pipeline for testing and PyPI publishing (<b style="font-weight:400;color:#5675f3">RobertoCorti#8</b>)</span>
<svg style="left:849.7px;top:502.7px" width="12.8" height="12.8" viewBox="0 0 16 16" fill="#f0354a"><path d="M3.72 3.72a.75.75 0 0 1 1.06 0L8 6.94l3.22-3.22a.749.749 0 0 1 1.275.326.749.749 0 0 1-.215.734L9.060 8l3.220 3.220a.749.749 0 0 1-.326 1.275.749.749 0 0 1-.734-.215L8 9.060l-3.220 3.220a.751.751 0 0 1-1.042-.018.751.751 0 0 1-.018-1.042L6.940 8 3.720 4.780a.75.75 0 0 1 0-1.060Z"/></svg>
<span style="left:866.40px;top:503.94px;font:400 9.6px/13px 'Liberation Mono', monospace;color:#9198a1;letter-spacing:-0.157px;">f4f7dd5</span>
<div style="left:241px;top:532px;width:13px;height:14px;background:#0d1117"></div>
<svg style="left:241.2px;top:532.8px" width="12.8" height="12.8" viewBox="0 0 16 16" fill="#9198a1"><path d="M11.93 8.5a4.002 4.002 0 0 1-7.86 0H.75a.75.75 0 0 1 0-1.5h3.32a4.002 4.002 0 0 1 7.86 0h3.32a.75.75 0 0 1 0 1.5Zm-1.43-.75a2.5 2.5 0 1 0-5 0 2.5 2.5 0 0 0 5 0Z"/></svg>
<span style="left:288.00px;top:532.94px;font:400 9.6px/13px 'Liberation Mono', monospace;color:#9198a1;letter-spacing:0.006px;">Fix pre-commit issues: apply Black formatting and end-of-file fixes</span>
<svg style="left:849.9px;top:531.6px" width="12.8" height="12.8" viewBox="0 0 16 16" fill="#2cc251"><path d="M13.78 4.22a.75.75 0 0 1 0 1.06l-7.25 7.25a.75.75 0 0 1-1.060 0L2.220 9.280a.751.751 0 0 1 .018-1.042.751.751 0 0 1 1.042-.018L6 10.940l6.720-6.720a.75.75 0 0 1 1.060 0Z"/></svg>
<span style="left:866.40px;top:532.94px;font:400 9.6px/13px 'Liberation Mono', monospace;color:#9198a1;letter-spacing:0.009px;">7e5c5e7</span>
<div style="left:234.4px;top:577px;width:26.6px;height:26.6px;background:#212830;border-radius:50%;border:1.6px solid #0d1117"></div>
<svg style="left:241.3px;top:584px" width="12.8" height="12.8" viewBox="0 0 16 16" fill="#b7bfc9"><path d="M10.561 8.073a6.005 6.005 0 0 1 3.432 5.142.75.75 0 1 1-1.498.07 4.5 4.5 0 0 0-8.990 0 .75.75 0 0 1-1.498-.07 6.004 6.004 0 0 1 3.431-5.142 3.999 3.999 0 1 1 5.123 0ZM10.5 5a2.5 2.5 0 1 0-5 0 2.5 2.5 0 0 0 5 0Z"/></svg>
<svg style="left:266.6px;top:581.6px" width="16.8" height="16.8" viewBox="0 0 20 20"><defs><clipPath id="c1"><circle cx="10" cy="10" r="10"/></clipPath><linearGradient id="g1" x1="0" y1="0" x2="0" y2="1"><stop offset="0" stop-color="#a9baf1"/><stop offset="1" stop-color="#8b9de0"/></linearGradient></defs><g clip-path="url(#c1)"><rect width="20" height="20" fill="url(#g1)"/><ellipse cx="10" cy="19.600" rx="7" ry="4.600" fill="#c6c9ee"/><rect x="8.900" y="12.500" width="2.400" height="3.200" fill="#c0a0a4"/><ellipse cx="10" cy="8.200" rx="4.700" ry="4.300" fill="#2a1a58"/><ellipse cx="10.100" cy="10.300" rx="2.900" ry="3.500" fill="#b497a6"/><circle cx="8.900" cy="9.700" r=".650" fill="#3b2b55"/><circle cx="11.300" cy="9.700" r=".650" fill="#3b2b55"/></g></svg>
<span style="left:285.60px;top:581.01px;font:700 11.5px/16px 'Liberation Sans', sans-serif;color:#f0f6fc;letter-spacing:0.130px;">stefano-polo</span>
<span style="left:359.00px;top:581.01px;font:400 11.5px/16px 'Liberation Sans', sans-serif;color:#9198a1;letter-spacing:0.052px;">assigned</span>
<span style="left:409.00px;top:581.01px;font:700 11.5px/16px 'Liberation Sans', sans-serif;color:#f0f6fc;letter-spacing:0.094px;">stefano-polo</span>
<span style="left:482.40px;top:581.01px;font:400 11.5px/16px 'Liberation Sans', sans-serif;color:#9198a1;letter-spacing:0.138px;">and unassigned</span>
<span style="left:568.60px;top:581.01px;font:700 11.5px/16px 'Liberation Sans', sans-serif;color:#f0f6fc;letter-spacing:0.094px;">stefano-polo</span>
<span style="left:642.00px;top:581.01px;font:400 11.5px/16px 'Liberation Sans', sans-serif;color:#9198a1;letter-spacing:0.023px;">2 weeks ago</span>
<span style="left:925.40px;top:239.57px;font:700 9.9px/14px 'Liberation Sans', sans-serif;color:#9198a1;letter-spacing:-0.146px;">Reviewers</span>
<svg style="left:925px;top:261px" width="16" height="16" viewBox="0 0 20 20"><defs><clipPath id="c2"><circle cx="10" cy="10" r="10"/></clipPath><linearGradient id="g2" x1="0" y1="0" x2="0" y2="1"><stop offset="0" stop-color="#a9baf1"/><stop offset="1" stop-color="#8b9de0"/></linearGradient></defs><g clip-path="url(#c2)"><rect width="20" height="20" fill="url(#g2)"/><ellipse cx="10" cy="19.600" rx="7" ry="4.600" fill="#c6c9ee"/><rect x="8.900" y="12.500" width="2.400" height="3.200" fill="#c0a0a4"/><ellipse cx="10" cy="8.200" rx="4.700" ry="4.300" fill="#2a1a58"/><ellipse cx="10.100" cy="10.300" rx="2.900" ry="3.500" fill="#b497a6"/><circle cx="8.900" cy="9.700" r=".650" fill="#3b2b55"/><circle cx="11.300" cy="9.700" r=".650" fill="#3b2b55"/></g></svg>
<span style="left:944.60px;top:260.57px;font:700 9.9px/14px 'Liberation Sans', sans-serif;color:#f0f6fc;letter-spacing:0.053px;">stefano-polo</span>
<svg style="left:1149px;top:261.8px" width="12.8" height="12.8" viewBox="0 0 16 16" fill="#2cc251"><path d="M13.78 4.22a.75.75 0 0 1 0 1.06l-7.25 7.25a.75.75 0 0 1-1.060 0L2.220 9.280a.751.751 0 0 1 .018-1.042.751.751 0 0 1 1.042-.018L6 10.940l6.720-6.720a.75.75 0 0 1 1.060 0Z"/></svg>
<div style="left:925px;top:290px;width:237px;height:1px;background:#2f353d"></div>
<span style="left:925.40px;top:302.57px;font:700 9.9px/14px 'Liberation Sans', sans-serif;color:#9198a1;letter-spacing:-0.338px;">Assignees</span>
<span style="left:925.40px;top:323.57px;font:400 9.9px/14px 'Liberation Sans', sans-serif;color:#f0f6fc;letter-spacing:0.098px;">No one assigned</span>
<div style="left:925px;top:351px;width:237px;height:1px;background:#2f353d"></div>
<span style="left:925.40px;top:364.57px;font:700 9.9px/14px 'Liberation Sans', sans-serif;color:#9198a1;letter-spacing:-0.298px;">Labels</span>
<span style="left:925.40px;top:385.57px;font:400 9.9px/14px 'Liberation Sans', sans-serif;color:#f0f6fc;letter-spacing:0.117px;">None yet</span>
<div style="left:925px;top:413px;width:237px;height:1px;background:#2f353d"></div>
<span style="left:925.40px;top:426.57px;font:700 9.9px/14px 'Liberation Sans', sans-serif;color:#9198a1;letter-spacing:-0.168px;">Projects</span>
<span style="left:925.40px;top:447.57px;font:400 9.9px/14px 'Liberation Sans', sans-serif;color:#f0f6fc;letter-spacing:0.117px;">None yet</span>
<div style="left:925px;top:475px;width:237px;height:1px;background:#2f353d"></div>
<span style="left:925.40px;top:488.57px;font:700 9.9px/14px 'Liberation Sans', sans-serif;color:#9198a1;letter-spacing:0.069px;">Milestone</span>
<span style="left:925.40px;top:509.57px;font:400 9.9px/14px 'Liberation Sans', sans-serif;color:#f0f6fc;letter-spacing:0.133px;">No milestone</span>
<div style="left:925px;top:537px;width:237px;height:1px;background:#2f353d"></div>
<span style="left:925.40px;top:550.57px;font:700 9.9px/14px 'Liberation Sans', sans-serif;color:#9198a1;letter-spacing:0.108px;">Development</span>
<span style="left:925.40px;top:570.57px;font:400 9.9px/14px 'Liberation Sans', sans-serif;color:#f0f6fc;letter-spacing:0.078px;">Successfully merging this pull request may close</span>
<span style="left:925.40px;top:585.57px;font:400 9.9px/14px 'Liberation Sans', sans-serif;color:#f0f6fc;letter-spacing:0.009px;">these issues.</span>
</div></body></html>
